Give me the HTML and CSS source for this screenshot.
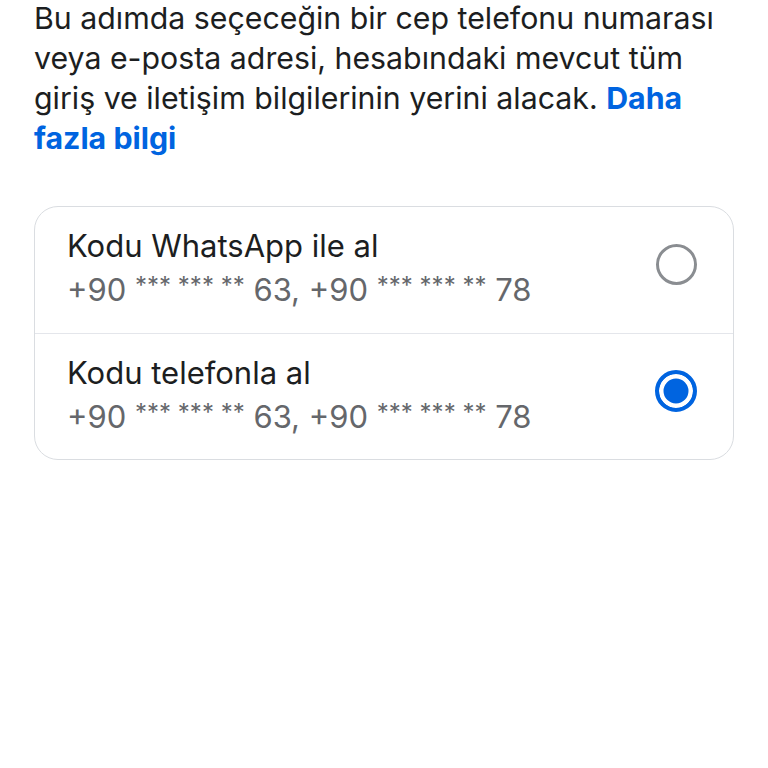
FILE: index.html
```html
<!DOCTYPE html>
<html lang="tr">
<head>
  <meta charset="utf-8">
  <title>Kodu al</title>
  <link rel="stylesheet" href="styles.css">
</head>
<body>
  <div class="page">
    <p class="intro">
      Bu adımda seçeceğin bir cep telefonu numarası veya e-posta adresi, hesabındaki mevcut tüm giriş ve iletişim bilgilerinin yerini alacak.
      <a href="#" class="more">Daha fazla bilgi</a>
    </p>

    <div class="options">
      <label class="option">
        <div class="option-text">
          <div class="option-title">Kodu WhatsApp ile al</div>
          <div class="option-sub">+90 <span class="stars">*** *** **</span> 63, +90 <span class="stars">*** *** **</span> 78</div>
        </div>
        <span class="radio"></span>
      </label>
      <label class="option">
        <div class="option-text">
          <div class="option-title">Kodu telefonla al</div>
          <div class="option-sub">+90 <span class="stars">*** *** **</span> 63, +90 <span class="stars">*** *** **</span> 78</div>
        </div>
        <span class="radio checked"></span>
      </label>
    </div>
  </div>
</body>
</html>
```

FILE: styles.css
```css
body {
  font-family: Inter, "Noto Sans", sans-serif;
  margin: 0;
  padding: 0;
  background: #fff;
  color: #1c1e21;
}
.page {
  padding: 0 34px;
}
.intro {
  max-width: 690px;
  margin: -2px 0 0;
  font-size: 30.3px;
  line-height: 40px;
  color: #1c1e21;
}
.more {
  color: #0064e0;
  font-weight: 700;
  text-decoration: none;
}
.options {
  margin-top: 48px;
  border: 1.5px solid #dadde1;
  border-radius: 24px;
  overflow: hidden;
}
.option {
  display: flex;
  align-items: center;
  justify-content: space-between;
  height: 126px;
  padding: 0 36px 0 32px;
  box-sizing: border-box;
}
.option + .option {
  border-top: 1px solid #e4e6eb;
}
.option-text {
  padding-bottom: 4px;
}
.option-title {
  font-size: 31px;
  line-height: 40px;
  color: #1c1e21;
}
.option-sub {
  font-size: 31px;
  line-height: 40px;
  color: #65676b;
}
.stars {
  font-size: 24px;
  vertical-align: 7px;
}
.radio {
  width: 41px;
  height: 41px;
  margin-bottom: 12px;
  border-radius: 50%;
  border: 3px solid #8a8d91;
  box-sizing: border-box;
}
.radio.checked {
  width: 42px;
  height: 42px;
  border: 4px solid #0064e0;
  background: #0064e0;
  box-shadow: inset 0 0 0 4.5px #fff;
}
```
